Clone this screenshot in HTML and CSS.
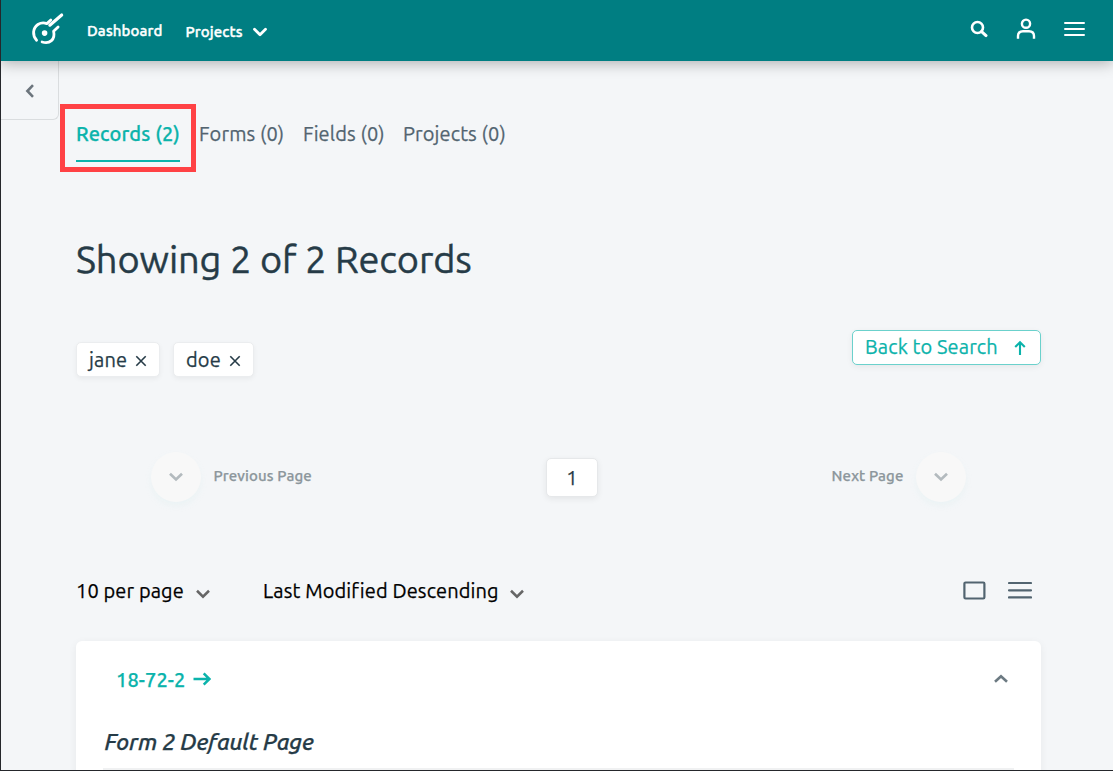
FILE: index.html
```html
<!DOCTYPE html>
<html lang="en">
<head>
<meta charset="utf-8">
<title>Records</title>
<link rel="stylesheet" href="styles.css">
</head>
<body>
<div class="app">
  <header class="topbar">
    <svg class="logo" width="36" height="36" viewBox="0 0 36 36">
      <g fill="none" stroke="#fff" stroke-width="2.8" stroke-linecap="round" stroke-linejoin="round">
        <path d="M5.6 28.3C1.1 23.4 1.7 16.2 6.9 12.5C9.7 10.7 13.1 10.5 15.8 11.6L19.8 8"/>
        <path d="M18.8 13.2L30.7 3" stroke-width="3.1"/>
        <path d="M27.1 14.9L22.6 19.2C24.5 27.6 18.7 32.4 11.1 30"/>
      </g>
      <circle cx="13.6" cy="21.1" r="2.8" fill="#fff"/>
    </svg>
    <a class="nav-dash">Dashboard</a>
    <a class="nav-projects">Projects</a>
    <svg class="nav-caret" width="16" height="11" viewBox="0 0 16 11"><path d="M2.5 2.2L8 7.7L13.5 2.2" fill="none" stroke="#fff" stroke-width="2.8" stroke-linecap="round" stroke-linejoin="round"/></svg>
    <div class="actions">
      <svg width="18" height="18" viewBox="0 0 18 18" fill="none" stroke="#fff" stroke-width="2.6"><circle cx="7.5" cy="7.5" r="5.5"/><path d="M11.6 11.6L16 15.6" stroke-width="3" stroke-linecap="round"/></svg>
      <svg width="20" height="22" viewBox="0 0 20 22" fill="none" stroke="#fff" stroke-width="2.4"><circle cx="10" cy="5.7" r="4.1"/><path d="M2 20.7V18Q2 13.2 7 13.2H13Q18 13.2 18 18V20.7"/></svg>
      <svg width="21" height="16" viewBox="0 0 21 16" stroke="#fff" stroke-width="2" stroke-linecap="round"><path d="M1 2H20M1 8H20M1 14H20"/></svg>
    </div>
  </header>
  <div class="body">
    <aside class="collapse"><svg width="12" height="16" viewBox="0 0 12 16"><path d="M9 2.2L3.4 8L9 13.8" fill="none" stroke="#6c757d" stroke-width="2.6"/></svg></aside>
    <main class="content">
      <nav class="tabs">
        <a class="tab tab-active">Records (2)<span class="highlight"></span></a>
        <a class="tab tab-forms">Forms (0)</a>
        <a class="tab tab-fields">Fields (0)</a>
        <a class="tab tab-projects">Projects (0)</a>
      </nav>
      <h1 class="title">Showing 2 of 2 Records</h1>
      <div class="filters">
        <div class="chips">
          <span class="chip chip-jane"><span class="chip-text">jane</span><svg width="12" height="12" viewBox="0 0 12 12"><path d="M1.3 1.3L10.7 10.7M10.7 1.3L1.3 10.7" stroke="#263b47" stroke-width="1.6"/></svg></span>
          <span class="chip chip-doe"><span class="chip-text">doe</span><svg width="12" height="12" viewBox="0 0 12 12"><path d="M1.3 1.3L10.7 10.7M10.7 1.3L1.3 10.7" stroke="#263b47" stroke-width="1.6"/></svg></span>
        </div>
        <a class="back"><span class="back-text">Back to Search</span><svg width="12" height="16" viewBox="0 0 12 16"><path d="M6 15V2.5M1.2 7L6 2.2L10.8 7" fill="none" stroke="#0bb3ab" stroke-width="2.1"/></svg></a>
      </div>
      <div class="pager">
        <div class="pager-side"><span class="round"><svg width="16" height="10" viewBox="0 0 16 10"><path d="M2 1.8L8 7.4L14 1.8" fill="none" stroke="#b3babe" stroke-width="2.7"/></svg></span><span class="page-label">Previous Page</span></div>
        <span class="page-number">1</span>
        <div class="pager-side pager-next"><span class="page-label">Next Page</span><span class="round"><svg width="16" height="10" viewBox="0 0 16 10"><path d="M2 1.8L8 7.4L14 1.8" fill="none" stroke="#b3babe" stroke-width="2.7"/></svg></span></div>
      </div>
      <div class="options">
        <span class="per-page">10 per page</span>
        <svg class="caret" width="16" height="10" viewBox="0 0 16 10"><path d="M2 1.8L8 7.6L14 1.8" fill="none" stroke="#666" stroke-width="2.6"/></svg>
        <span class="sort">Last Modified Descending</span>
        <svg class="caret" width="16" height="10" viewBox="0 0 16 10"><path d="M2 1.8L8 7.6L14 1.8" fill="none" stroke="#666" stroke-width="2.6"/></svg>
        <div class="views">
          <svg width="23" height="19" viewBox="0 0 23 19"><rect x="1.4" y="1.5" width="20" height="16" rx="1.2" fill="none" stroke="#526470" stroke-width="2.2"/></svg>
          <svg width="24" height="19" viewBox="0 0 24 19" stroke="#526470" stroke-width="2.2" stroke-linecap="round"><path d="M1 2H23M1 9.3H23M1 16.4H23"/></svg>
        </div>
      </div>
      <section class="card">
        <div class="card-head">
          <a class="record-id">18-72-2</a>
          <svg class="record-arrow" width="18" height="14" viewBox="0 0 18 14"><path d="M0.5 7H16.2M10.7 1.3L16.4 7L10.7 12.7" fill="none" stroke="#0bb3ab" stroke-width="2.5"/></svg>
          <svg class="card-toggle" width="16" height="10" viewBox="0 0 16 10"><path d="M2 7.8L8 2.2L14 7.8" fill="none" stroke="#6c7a82" stroke-width="2.6"/></svg>
        </div>
        <h2 class="form-title">Form 2 Default Page</h2>
        <div class="form-box"></div>
      </section>
    </main>
  </div>
</div>
</body>
</html>
```
FILE: styles.css
```css
* { box-sizing: border-box; }
body { margin: 0; background: #f4f6f8; font-family: Ubuntu, "Noto Sans", sans-serif; color: #263b47; overflow: hidden; letter-spacing: .12px; -webkit-text-stroke: .25px currentColor; }
svg { display: block; flex: none; }
a, span, h1, h2 { white-space: nowrap; }
.app { height: 771px; border-left: 1px solid #25272b; border-bottom: 1px solid #25272b; overflow: hidden; display: flex; flex-direction: column; }
.topbar { height: 61px; flex: none; background: #007e82; display: flex; align-items: flex-start; color: #fff; position: relative; z-index: 2; box-shadow: 0 2px 14px rgba(0,0,0,.3); padding-left: 30px; font-size: 15px; font-weight: 500; line-height: 20px; -webkit-text-stroke-width: .4px; }
.logo { margin-top: 12px; }
.nav-dash { margin: 21px 0 0 20px; width: 98.5px; }
.nav-projects { margin-top: 22px; width: 66px; }
.nav-caret { margin-top: 27px; }
.actions { margin-left: auto; margin-right: 28px; margin-top: 17px; height: 24px; display: flex; align-items: center; }
.actions svg:nth-child(2) { margin-left: 28px; }
.actions svg:nth-child(3) { margin-left: 28px; }
.body { display: flex; flex: 1; min-height: 0; align-items: flex-start; }
.collapse { width: 58px; height: 59px; border: 1px solid #dadddf; border-width: 0 1px 1px 0; border-radius: 0 0 6px 0; display: flex; align-items: center; justify-content: center; flex: none; padding-top: 2px; }
.content { width: 982px; padding-left: 17px; padding-top: 55px; }
.tabs { display: flex; gap: 19px; font-size: 20px; line-height: 36px; color: #526470; height: 46px; }
.tab { position: relative; height: 46px; }
.tab-active { width: 104px; color: #0bb3ab; font-weight: 500; border-bottom: 2px solid #0bb3ab; }
.tab-forms { width: 85px; }
.tab-fields { width: 81px; }
.highlight { position: absolute; left: -16px; top: -12px; width: 136px; height: 68px; border: 5px solid #ff4245; }
.title { margin: 73px 0 0; font-size: 38px; font-weight: 400; line-height: 48px; letter-spacing: -.1px; -webkit-text-stroke-width: .4px; }
.filters { display: flex; justify-content: space-between; margin-top: 47px; height: 47px; font-size: 20px; align-items: flex-start; }
.chips { display: flex; gap: 13px; margin-top: 12px; }
.chip { height: 35px; display: flex; align-items: center; justify-content: space-between; padding: 0 12px; background: #fff; border: 1px solid #ebedef; border-radius: 5px; box-shadow: 0 2px 5px rgba(0,0,0,.05); }
.chip svg { margin-top: 3px; }
.chip-jane { width: 84px; }
.chip-doe { width: 81px; }
.back { width: 189px; height: 35px; display: flex; justify-content: space-between; align-items: center; padding: 0 14px 0 12px; color: #0bb3ab; background: #fff; border: 1px solid #6bd1cc; border-radius: 5px; box-shadow: 0 2px 6px rgba(0,0,0,.06); }
.back-text { padding-bottom: 2px; }
.pager { display: grid; grid-template-columns: 395px 52px 1fr; align-items: center; padding: 0 75px; margin-top: 75px; height: 50px; font-size: 15px; font-weight: 500; color: #8c969c; }
.pager-side { display: flex; align-items: center; gap: 12.5px; }
.pager-next { justify-content: flex-end; }
.page-label { padding-bottom: 3px; }
.round { width: 50px; height: 50px; border-radius: 50%; background: #f8f8f8; display: flex; align-items: center; justify-content: center; box-shadow: 0 4px 6px rgba(200,235,235,.18); }
.page-number { height: 39px; border: 1px solid #e6e8ea; border-radius: 5px; background: #fff; font-size: 20px; font-weight: 400; color: #263b47; display: flex; align-items: center; justify-content: center; box-shadow: 0 2px 6px rgba(0,0,0,.07); }
.options { display: flex; align-items: center; height: 30px; margin-top: 74px; color: #000; font-size: 20px; line-height: 30px; }
.per-page { width: 119px; }
.sort { width: 246px; margin-left: 52px; }
.caret { margin-top: 6px; }
.views { display: flex; gap: 22px; margin-left: auto; margin-right: 9px; padding-bottom: 2px; }
.card { margin-top: 35px; height: 160px; background: #fff; border-radius: 6px; box-shadow: 0 2px 8px rgba(0,0,0,.06); }
.card-head { display: flex; align-items: center; padding: 23px 32px 0 40px; height: 54px; font-size: 20px; font-weight: 500; color: #0bb3ab; }
.record-id { width: 76.5px; }
.record-arrow { margin-bottom: 1px; }
.card-toggle { margin-left: auto; margin-bottom: 2px; }
.form-title { margin: 31px 0 0 28.5px; font-size: 23px; font-weight: 500; font-style: italic; line-height: 32px; letter-spacing: -.2px; }
.form-box { height: 20px; margin: 10px 27px 0; background: #f0f1f2; }
```
